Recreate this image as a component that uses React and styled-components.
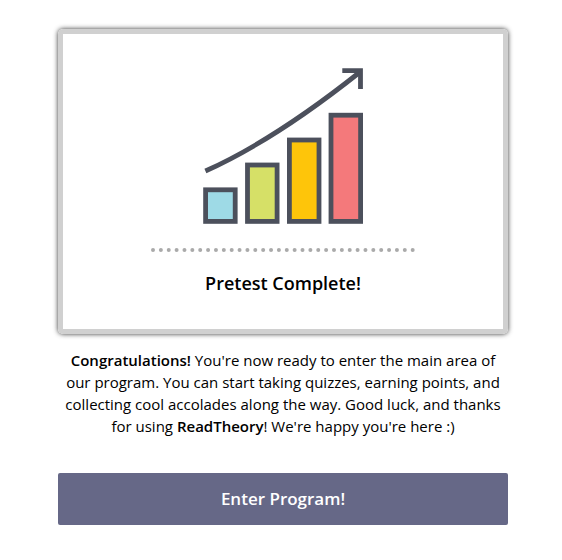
import React from 'react';

import styled, {createGlobalStyle} from 'styled-components';

const GlobalStyle = createGlobalStyle`
  body {
    margin: 0;
    background: #fff;
    color: #000;
    font-family: 'Open Sans', 'Noto Sans', sans-serif;
  }
`;

const Wrapper = styled.main`
  box-sizing: border-box;
  max-width: 562px;
  margin: 0 auto;
  padding: 29px 54px 35px 58px;
`;

const Card = styled.section`
  display: flex;
  flex-direction: column;
  align-items: center;
  padding: 34px 0 33px;
  border: 5px solid #d0d0d0;
  border-radius: 5px;
  box-shadow: 0 0 5px #333;
`;

const Chart = styled.svg`
  display: block;
  width: 160px;
  height: 156px;
  fill: none;
  stroke: #4c505c;
  stroke-width: 4.8;
`;

const Divider = styled.hr`
  width: 60%;
  margin: 24px 0 18px;
  border: 0;
  border-top: 4px dotted #aaa;
`;

const Title = styled.h1`
  margin: 0;
  font-size: 18px;
  font-weight: 600;
  line-height: 26px;
`;

const Message = styled.p`
  margin: 15px 0 36px;
  font-size: 15px;
  line-height: 22px;
  text-align: center;
`;

const Strong = styled.strong`
  font-weight: 600;
`;

const EnterButton = styled.button`
  display: block;
  width: 100%;
  padding: 14px;
  border: 0;
  border-radius: 2px;
  background: #666887;
  color: #fff;
  font-family: inherit;
  font-size: 17px;
  font-weight: 600;
  line-height: 24px;
  cursor: pointer;
`;

const bars = [
  {x: 2.6, y: 121.8, color: '#9edae6'},
  {x: 44.5, y: 97, color: '#d6e067'},
  {x: 86.4, y: 72, color: '#fec50a'},
  {x: 128, y: 47.2, color: '#f4797b'},
];

const GrowthChart = () => (
  <Chart viewBox="0 0 160 156" aria-hidden="true">
    {bars.map(({x, y, color}) => (
      <rect
        key={color}
        x={x}
        y={y}
        width="29.6"
        height={153.4 - y}
        fill={color}
      />
    ))}
    <path d="M2.4 103C56 79 108 43 157 4" />
    <path d="M139.3 2.6H157.5V21" />
  </Chart>
);

const App = () => {
  return (
    <>
      <GlobalStyle />
      <Wrapper>
        <Card>
          <GrowthChart />
          <Divider />
          <Title>Pretest Complete!</Title>
        </Card>
        <Message>
          <Strong>Congratulations!</Strong> You're now ready to enter the main
          area of our program. You can start taking quizzes, earning points,
          and collecting cool accolades along the way. Good luck, and thanks
          for using <Strong>ReadTheory</Strong>! We're happy you're here :)
        </Message>
        <EnterButton type="button">Enter Program!</EnterButton>
      </Wrapper>
    </>
  );
};

export default App;
